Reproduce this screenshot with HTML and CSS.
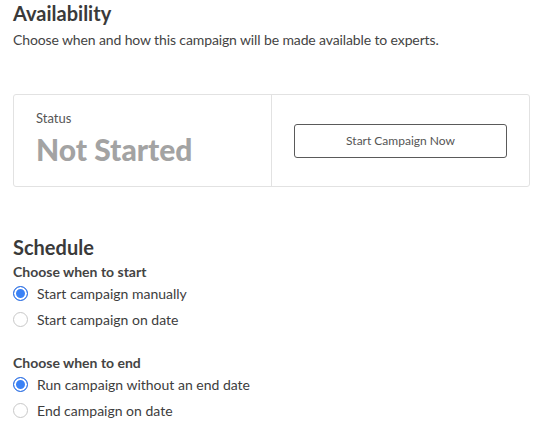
FILE: index.html
```html
<!DOCTYPE html>
<html>
<head>
<meta charset="utf-8">
<link rel="stylesheet" href="styles.css">
</head>
<body>
<main class="page">
  <section class="availability">
    <h2 class="title">Availability</h2>
    <p class="subtitle">Choose when and how this campaign will be made available to experts.</p>
    <div class="card">
      <div class="card-status">
        <div class="status-label">Status</div>
        <div class="status-value">Not Started</div>
      </div>
      <div class="card-action">
        <button class="btn">Start Campaign Now</button>
      </div>
    </div>
  </section>
  <section class="schedule">
    <h2 class="title">Schedule</h2>
    <div class="group">
      <div class="group-label">Choose when to start</div>
      <label class="radio-row"><span class="radio checked"></span><span>Start campaign manually</span></label>
      <label class="radio-row"><span class="radio"></span><span>Start campaign on date</span></label>
    </div>
    <div class="group">
      <div class="group-label">Choose when to end</div>
      <label class="radio-row"><span class="radio checked"></span><span>Run campaign without an end date</span></label>
      <label class="radio-row"><span class="radio"></span><span>End campaign on date</span></label>
    </div>
  </section>
</main>
</body>
</html>
```
FILE: styles.css
```css
html, body {
  margin: 0;
  padding: 0;
  background: #ffffff;
}
body {
  font-family: Lato, "Liberation Sans", sans-serif;
  color: #3d3d3d;
}
.page {
  padding: 1px 28px 0 13px;
}
.title {
  margin: 0;
  font-size: 20px;
  font-weight: 700;
  line-height: 24px;
  color: #3a3a3a;
}
.subtitle {
  margin: 5px 0 0;
  font-size: 14px;
  line-height: 20px;
  color: #444444;
  letter-spacing: -0.12px;
}
.card {
  margin-top: 44px;
  display: flex;
  border: 1px solid #e2e2e2;
  border-radius: 3px;
  height: 93px;
  box-sizing: border-box;
}
.card-status {
  width: 258px;
  border-right: 1px solid #e2e2e2;
  padding: 15px 0 0 22px;
  box-sizing: border-box;
}
.status-label {
  font-size: 13px;
  line-height: 16px;
  color: #555555;
}
.status-value {
  margin-top: 5px;
  font-size: 30px;
  font-weight: 900;
  line-height: 36px;
  color: #a3a3a3;
  letter-spacing: 0;
}
.card-action {
  flex: 1;
  display: flex;
  align-items: center;
  padding-left: 22px;
}
.btn {
  width: 213px;
  height: 34px;
  margin-top: 0;
  border: 1px solid #5a5a5a;
  border-radius: 3px;
  background: #ffffff;
  font-family: Lato, "Liberation Sans", sans-serif;
  font-size: 12px;
  color: #555555;
  padding: 0;
}
.schedule {
  margin-top: 48px;
}
.group {
  margin-top: 5px;
}
.group + .group {
  margin-top: 23px;
}
.group-label {
  font-size: 14px;
  font-weight: 700;
  line-height: 16px;
  color: #444444;
}
.radio-row {
  display: flex;
  align-items: center;
  gap: 9px;
  height: 26px;
  font-size: 14px;
  color: #3d3d3d;
}
.radio {
  width: 15px;
  height: 15px;
  box-sizing: border-box;
  border-radius: 50%;
  border: 1px solid #c8c8c8;
  background: #ffffff;
  flex: none;
}
.radio.checked {
  border: 1px solid #2f6fe0;
  background: #3b82f6;
  box-shadow: inset 0 0 0 2px #ffffff;
}
```
